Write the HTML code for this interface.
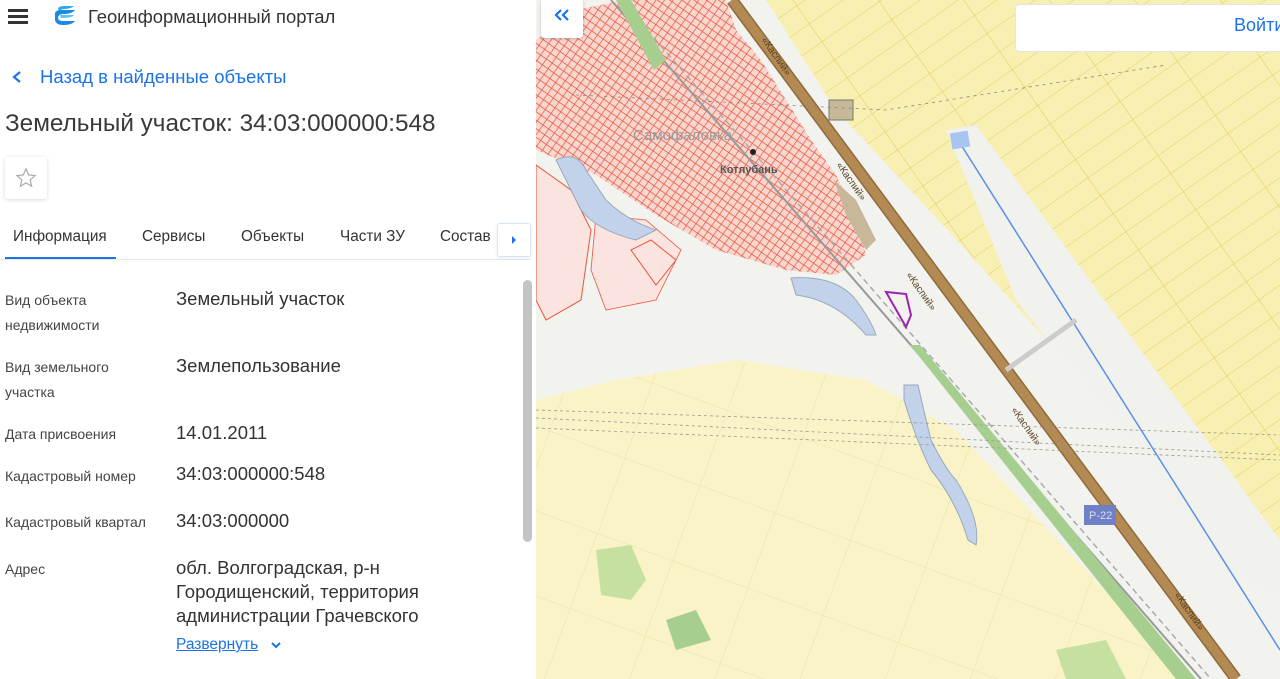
<!DOCTYPE html>
<html><head><meta charset="utf-8"><style>
*{margin:0;padding:0;box-sizing:border-box}
body{width:1280px;height:679px;overflow:hidden;font-family:"Liberation Sans",sans-serif;background:#fff;position:relative}
#left{position:absolute;left:0;top:0;width:536px;height:679px;background:#fff;overflow:hidden}
#map{position:absolute;left:536px;top:0;width:744px;height:679px}
.lbl{position:absolute;left:5px;font-size:14px;color:#444;line-height:25px}
.val{position:absolute;left:176px;font-size:18.5px;color:#333;line-height:24px}
.tab{position:absolute;top:228px;font-size:15.3px;color:#333}
</style></head><body>
<div id="left">
  <div style="position:absolute;left:8px;top:9px;width:20px;height:3px;background:#333;box-shadow:0 6px 0 #333,0 12px 0 #333"></div>
  <svg style="position:absolute;left:52px;top:5px" width="25" height="24" viewBox="0 0 25 24">
    <path d="M6 3 Q8 1 12 1 L22 1 Q18 4 12 4 Q8 4 7 7 Z" fill="#2aa8e8"/>
    <path d="M3 8 Q4 5 9 5 L23 5 Q20 9 11 9 Q7 9 6 12 Q6 16 10 16 L23 16 Q20 20 11 20 Q4 20 3 15 Z" fill="#1e88e5"/>
    <path d="M8 10 L22 10 Q20 13 9 13 Z" fill="#5cc3f2"/>
  </svg>
  <div style="position:absolute;left:88px;top:6px;font-size:18.4px;color:#333">Геоинформационный портал</div>
  <svg style="position:absolute;left:11px;top:70px" width="12" height="14"><path d="M9 2 L3 7 L9 12" stroke="#1a73e8" stroke-width="2.2" fill="none"/></svg>
  <div style="position:absolute;left:40px;top:66px;font-size:18.5px;color:#1a73e8">Назад в найденные объекты</div>
  <div style="position:absolute;left:5px;top:110px;font-size:24.3px;color:#3a3a3a">Земельный участок: 34:03:000000:548</div>
  <div style="position:absolute;left:5px;top:157px;width:42px;height:42px;border-radius:3px;box-shadow:0 1px 4px rgba(0,0,0,.15);background:#fff"></div>
  <svg style="position:absolute;left:15px;top:167px" width="22" height="22" viewBox="0 0 24 24"><path d="M12 2 L14.9 8.6 L22 9.3 L16.6 14 L18.2 21 L12 17.3 L5.8 21 L7.4 14 L2 9.3 L9.1 8.6 Z" fill="none" stroke="#aaa" stroke-width="1.3"/></svg>
  <div class="tab" style="left:13px">Информация</div>
  <div class="tab" style="left:142px">Сервисы</div>
  <div class="tab" style="left:241px">Объекты</div>
  <div class="tab" style="left:340px">Части ЗУ</div>
  <div class="tab" style="left:440px">Состав</div>
  <div style="position:absolute;left:5px;top:257px;width:111px;height:2px;background:#1a73e8"></div>
  <div style="position:absolute;left:0;top:259px;width:530px;height:1px;background:#e6e6e6"></div>
  <div style="position:absolute;left:497px;top:223px;width:34px;height:34px;border:1px solid #d8e4f4;border-radius:3px;background:#fff;box-shadow:0 1px 3px rgba(0,0,0,.08)"></div>
  <svg style="position:absolute;left:510px;top:235px" width="8" height="10"><path d="M2 1 L6 5 L2 9 Z" fill="#1a73e8"/></svg>
  <div style="position:absolute;left:523px;top:280px;width:9px;height:262px;border-radius:5px;background:#c4c4c4"></div>
  <div class="lbl" style="top:288px">Вид объекта<br>недвижимости</div>
  <div class="val" style="top:287px">Земельный участок</div>
  <div class="lbl" style="top:355px">Вид земельного<br>участка</div>
  <div class="val" style="top:354px">Землепользование</div>
  <div class="lbl" style="top:422px">Дата присвоения</div>
  <div class="val" style="top:421px">14.01.2011</div>
  <div class="lbl" style="top:464px">Кадастровый номер</div>
  <div class="val" style="top:462px">34:03:000000:548</div>
  <div class="lbl" style="top:510px">Кадастровый квартал</div>
  <div class="val" style="top:509px">34:03:000000</div>
  <div class="lbl" style="top:557px">Адрес</div>
  <div class="val" style="top:556px">обл. Волгоградская, р-н<br>Городищенский, территория<br>администрации Грачевского</div>
  <div style="position:absolute;left:176px;top:636px;font-size:15.5px;color:#1a73e8;text-decoration:underline">Развернуть</div>
  <svg style="position:absolute;left:270px;top:641px" width="12" height="9"><path d="M2 2 L6 6 L10 2" stroke="#1a73e8" stroke-width="2" fill="none"/></svg>
</div>
<svg id="map" width="744" height="679" viewBox="0 0 744 679">
  <defs>
    <pattern id="grid" width="7" height="7" patternUnits="userSpaceOnUse" patternTransform="rotate(35)">
      <rect width="7" height="7" fill="#f9d6cf"/>
      <path d="M0 0 H7 M0 0 V7" stroke="#e5553a" stroke-width="1.4"/>
    </pattern>
    <pattern id="parc" width="70" height="22" patternUnits="userSpaceOnUse" patternTransform="rotate(-35)">
      <rect width="70" height="22" fill="#f8efb2"/>
      <path d="M0 0 H70 M0 0 V22" stroke="#e2cf5c" stroke-width="1.1"/>
    </pattern>
    <pattern id="parc2" width="80" height="80" patternUnits="userSpaceOnUse" patternTransform="rotate(20)">
      <rect width="80" height="80" fill="#faf3c8"/>
      <path d="M0 0 H80 M0 0 V80" stroke="#ece0a0" stroke-width="1"/>
    </pattern>
  </defs>
  <rect width="744" height="679" fill="url(#parc2)"/>
  <polygon points="230,0 744,0 744,679 710,679 260,120" fill="url(#parc)"/>
  <polygon points="0,0 230,0 300,110 430,250 600,440 744,590 744,679 650,679 420,430 330,380 200,360 80,380 0,400" fill="#f2f2ef"/>
  <polygon points="410,130 440,125 744,540 744,600 700,580 480,300" fill="#f1f1ee"/>
  <polygon points="0,40 40,10 90,0 190,0 200,30 225,60 250,100 275,140 300,175 320,215 330,255 300,275 250,270 180,250 120,215 60,175 0,150" fill="url(#grid)"/>
  <polygon points="0,165 35,190 55,230 45,300 10,320 0,300" fill="#fbe3df" stroke="#e8553c"/>
  <polygon points="60,215 110,220 145,250 120,300 70,310 55,270" fill="#fbe3df" stroke="#e8553c" stroke-width="0.8"/>
  <polygon points="95,250 115,240 140,260 120,285" fill="#fbe3df" stroke="#e8553c"/>
  <path d="M20,160 Q40,150 50,170 L70,200 Q90,220 120,230 L100,240 Q60,230 45,210 Z" fill="#c2d2ea" stroke="#9ab"/>
  <path d="M255,278 Q300,275 320,300 Q335,320 340,335 L330,335 Q300,300 260,295 Z" fill="#c2d2ea" stroke="#9ab"/>
  <path d="M368,385 L382,385 Q390,420 395,440 Q410,470 420,480 Q445,520 440,545 L432,540 Q420,500 395,470 Q380,440 368,400 Z" fill="#c2d2ea" stroke="#9ab"/>
  <line x1="75" y1="0" x2="665" y2="679" stroke="#999" stroke-width="2"/>
  <line x1="85" y1="0" x2="675" y2="679" stroke="#aaa" stroke-width="1.5" stroke-dasharray="6 4"/>
  <polygon points="374,345 384,345 660,679 640,679" fill="#a6cf8f"/>
  <polygon points="80,0 95,0 130,60 118,70" fill="#a6cf8f"/>
  <line x1="196" y1="0" x2="700" y2="679" stroke="#8f6a3a" stroke-width="12"/>
  <line x1="196" y1="0" x2="700" y2="679" stroke="#b38a54" stroke-width="9"/>
  <text x="0" y="0" font-size="10" fill="#5a4020" transform="translate(225,40) rotate(55)">«Каспий»</text>
  <text x="0" y="0" font-size="10" fill="#5a4020" transform="translate(300,165) rotate(55)">«Каспий»</text>
  <text x="0" y="0" font-size="10" fill="#5a4020" transform="translate(370,275) rotate(55)">«Каспий»</text>
  <text x="0" y="0" font-size="10" fill="#5a4020" transform="translate(475,410) rotate(55)">«Каспий»</text>
  <text x="0" y="0" font-size="10" fill="#5a4020" transform="translate(638,595) rotate(55)">«Каспий»</text>
  <rect x="293" y="100" width="24" height="20" fill="#c8b89a" stroke="#776"/>
  <polygon points="298,180 320,200 340,240 330,250 310,215" fill="#c8b89a"/>
  <polygon points="350,292 370,294 375,315 370,327" fill="none" stroke="#9a22b0" stroke-width="2"/>
  <line x1="422" y1="140" x2="744" y2="650" stroke="#5b8fe6" stroke-width="1.5"/>
  <rect x="415" y="132" width="18" height="16" fill="#a8c4f0" transform="rotate(-10 424 140)"/>
  <line x1="470" y1="370" x2="540" y2="320" stroke="#ccc" stroke-width="5"/>
  <path d="M0 410 L744 435 M0 418 L744 455 M0 428 L744 460" stroke="#9a9a90" stroke-width="0.8" stroke-dasharray="3 3" fill="none"/>
  <path d="M40 95 L350 110 L630 65" stroke="#888" stroke-width="0.8" stroke-dasharray="3 4" fill="none"/>
  <polygon points="60,550 95,545 110,580 95,600 65,595" fill="#c6e0a0"/>
  <polygon points="130,620 160,610 175,640 140,650" fill="#a6cf8f"/>
  <polygon points="520,650 570,640 590,679 530,679" fill="#c6e0a0"/>
  <rect x="548" y="505" width="32" height="20" fill="#7080c8"/>
  <text x="553" y="519" font-size="11" fill="#dde">Р-22</text>
  <circle cx="217" cy="152" r="3" fill="#222"/>
  <text x="97" y="140" font-size="15" fill="#999">Самофаловка</text>
  <text x="184" y="173" font-size="11" font-weight="bold" fill="#555">Котлубань</text>
</svg>
<div style="position:absolute;left:541px;top:0;width:42px;height:38px;background:#fff;border-radius:0 0 4px 4px;box-shadow:0 1px 3px rgba(0,0,0,.2)"></div>
<svg style="position:absolute;left:554px;top:8px" width="16" height="14"><path d="M7 2 L2 7 L7 12 M14 2 L9 7 L14 12" stroke="#1a73e8" stroke-width="2.2" fill="none"/></svg>
<div style="position:absolute;left:1015px;top:4px;width:275px;height:48px;background:#fff;border:1px solid #e4e4e4;border-radius:4px"></div>
<div style="position:absolute;left:1234px;top:15px;font-size:18px;color:#1a73e8">Войти</div>
</body></html>
